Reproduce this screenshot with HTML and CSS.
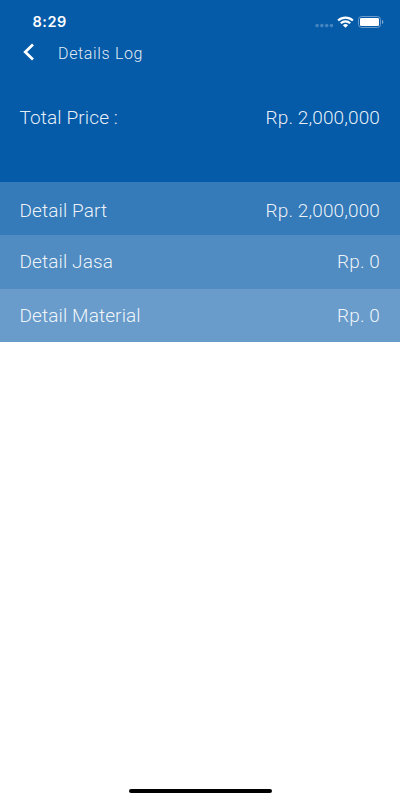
FILE: index.html
```html
<!DOCTYPE html>
<html lang="id">
<head>
<meta charset="utf-8">
<title>Details Log</title>
<link rel="stylesheet" href="styles.css">
</head>
<body>
<main class="screen">
  <header class="top">
    <div class="status">
      <span class="time">8:29</span>
      <span class="indicators">
        <svg class="dots" width="20" height="6" viewBox="0 0 20 6"><circle cx="2.1" cy="2.6" r="1.8"/><circle cx="6.9" cy="2.6" r="1.8"/><circle cx="11.7" cy="2.6" r="1.8"/><circle cx="16.5" cy="2.6" r="1.8"/></svg>
        <svg class="wifi" width="17" height="12" viewBox="0 0 17 12"><path d="M1.1 4.6a10.7 10.7 0 0 1 14.8 0M3.8 7.3a6.8 6.8 0 0 1 9.4 0"/><path class="fan" d="M5.9 9.2a3.8 3.8 0 0 1 5.2 0L8.5 11.7z"/></svg>
        <svg class="battery" width="26" height="12" viewBox="0 0 26 12"><rect class="case" x=".5" y=".5" width="22" height="11" rx="3"/><rect class="charge" x="2" y="2" width="19" height="8" rx="1.2"/><path class="charge cap" d="M24 4v4c1.8-.7 1.8-3.3 0-4"/></svg>
      </span>
    </div>
    <nav class="nav">
      <svg class="back" width="12" height="18" viewBox="0 0 12 18"><path d="M11 1.5 3.2 9l7.8 7.5"/></svg>
      <h1 class="title">Details Log</h1>
    </nav>
    <div class="total"><span>Total Price :</span><span>Rp. 2,000,000</span></div>
  </header>
  <section class="details">
    <div class="row part"><span>Detail Part</span><span>Rp. 2,000,000</span></div>
    <div class="row jasa"><span>Detail Jasa</span><span>Rp. 0</span></div>
    <div class="row material"><span>Detail Material</span><span>Rp. 0</span></div>
  </section>
  <div class="home"></div>
</main>
</body>
</html>
```

FILE: styles.css
```css
* { box-sizing: border-box; }
body { margin: 0; background: #fff; color: #fff; font-family: Roboto, sans-serif; font-weight: 300; }
.screen { height: 800px; display: flex; flex-direction: column; }
.top { height: 181.6px; background: #065ba9; }
.status { height: 40px; padding: 4px 16px 0 32.5px; display: flex; align-items: center; justify-content: space-between; }
.time { font: 600 14.5px/20px Inter, sans-serif; letter-spacing: .5px; }
.indicators { display: flex; align-items: center; gap: 3px; }
.dots { fill: #4484bf; margin-top: 7px; }
.wifi { margin-left: -1px; margin-right: 1px; }
.wifi path { fill: none; stroke: #fff; stroke-width: 2.1; }
.wifi .fan { fill: #fff; stroke: none; }
.case { fill: none; stroke: #6a9bca; }
.charge { fill: #fff; }
.cap { opacity: .5; }
.nav { height: 26px; padding-left: 22px; display: flex; align-items: center; gap: 24px; }
.back { fill: none; stroke: #fff; stroke-width: 2.7; margin-top: -2px; }
.title { margin: 0; font-size: 16px; font-weight: 300; letter-spacing: .65px; color: rgba(255, 255, 255, .9); }
.total, .row { display: flex; justify-content: space-between; align-items: center; padding: 0 20px 0 19.5px; font-size: 19px; letter-spacing: .12px; color: rgba(255, 255, 255, .92); }
.total { height: 50px; margin-top: 26px; }
.row { height: 53.5px; }
.part { background: #357ab9; padding-top: 4px; }
.jasa { background: #508bc1; }
.material { background: #699ccb; }
.home { width: 143px; height: 4.5px; border-radius: 3px; background: #000; margin: auto auto 7px 128.5px; }
```
